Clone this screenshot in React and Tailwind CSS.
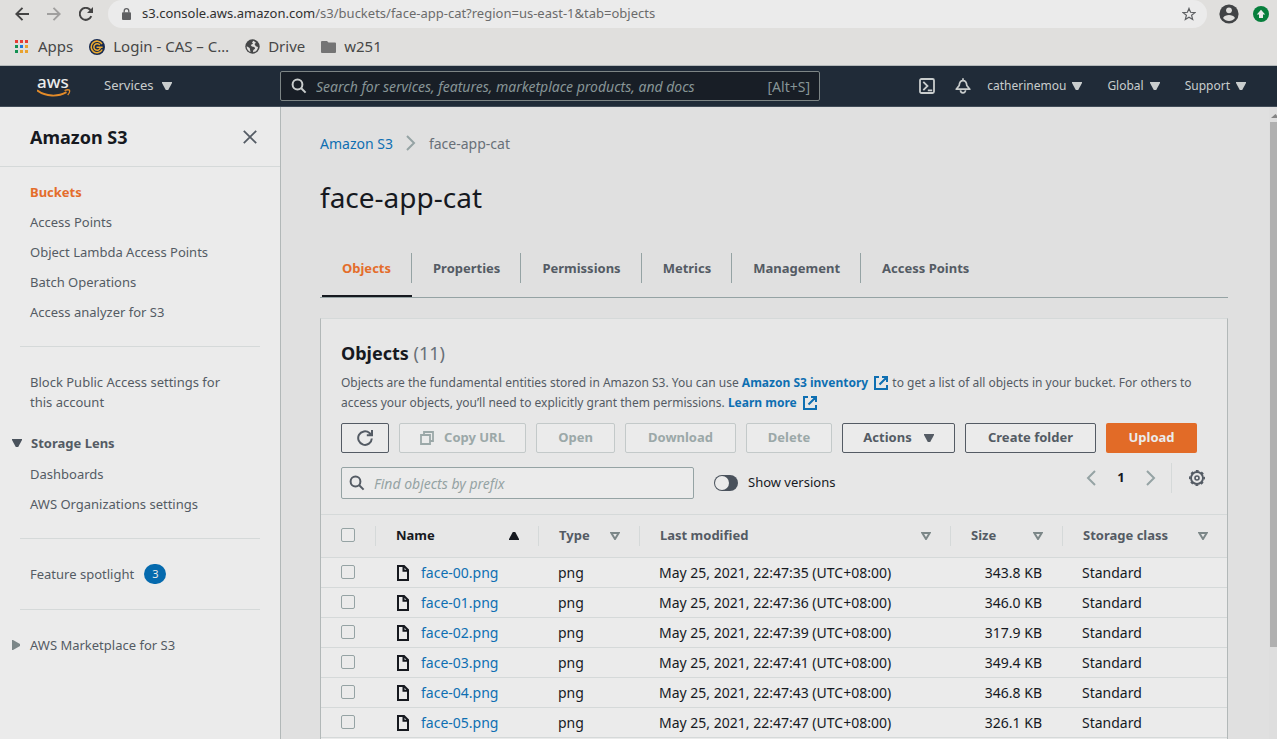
import React from "react";

const files = [
  ["face-00.png", "May 25, 2021, 22:47:35 (UTC+08:00)", "343.8 KB"],
  ["face-01.png", "May 25, 2021, 22:47:36 (UTC+08:00)", "346.0 KB"],
  ["face-02.png", "May 25, 2021, 22:47:39 (UTC+08:00)", "317.9 KB"],
  ["face-03.png", "May 25, 2021, 22:47:41 (UTC+08:00)", "349.4 KB"],
  ["face-04.png", "May 25, 2021, 22:47:43 (UTC+08:00)", "346.8 KB"],
  ["face-05.png", "May 25, 2021, 22:47:47 (UTC+08:00)", "326.1 KB"],
];

function Caret({ className = "" }) {
  return (
    <svg viewBox="0 0 10 8" className={"h-2 w-[10px] shrink-0 " + className} fill="currentColor" aria-hidden="true">
      <path d="M0 0h10v1L6.2 8H3.8L0 1z" />
    </svg>
  );
}

function SortIcon() {
  return (
    <svg viewBox="0 0 10 8" className="h-2 w-[10px] shrink-0 text-[#7c8788]" fill="none" stroke="currentColor" strokeWidth="2" aria-hidden="true">
      <path d="M1.3 1h7.4L5 7z" />
    </svg>
  );
}

function Magnifier({ className }) {
  return (
    <svg viewBox="0 0 16 16" className={"h-4 w-4 shrink-0 " + className} fill="none" stroke="currentColor" strokeWidth="2" aria-hidden="true">
      <circle cx="6.5" cy="6.5" r="4.9" />
      <path d="M10 10l4.600 4.600" />
    </svg>
  );
}

function External() {
  return (
    <svg viewBox="0 0 16 16" className="ml-[2px] inline-block h-4 w-4 align-[-4px]" fill="none" stroke="currentColor" strokeWidth="2" aria-hidden="true">
      <path d="M6 2H2v12h12v-4M9 2h5v5M14 2L6.500 9.500" />
    </svg>
  );
}

function BrowserBar() {
  return (
    <div className="border-b border-[#b4b9ba] bg-[#e0dfdd]">
      <div className="flex h-7 items-center pr-2">
        <div className="flex w-[108px] shrink-0 items-center gap-[18px] pl-[15px] text-[#444]">
          <button aria-label="Back">
            <svg viewBox="0 0 14 14" className="block h-[14px] w-[14px]" fill="none" stroke="currentColor" strokeWidth="1.9"><path d="M14 7H1.500M7.500 .8L1.300 7l6.200 6.200" /></svg>
          </button>
          <button aria-label="Forward" className="text-[#a09f9e]">
            <svg viewBox="0 0 14 14" className="block h-[14px] w-[14px]" fill="none" stroke="currentColor" strokeWidth="1.9"><path d="M0 7h12.500M6.500 .8L12.700 7l-6.200 6.200" /></svg>
          </button>
          <button aria-label="Reload">
            <svg viewBox="0 0 14 14" className="block h-[14px] w-[14px]" fill="none" stroke="currentColor" strokeWidth="2"><path d="M12.300 9.200A6 6 0 1 1 11.200 2.800L12.500 4" /><path d="M14 0v6H8z" fill="currentColor" stroke="none" /></svg>
          </button>
        </div>
        <div className="flex h-7 min-w-0 grow items-center rounded-full bg-[#ebebeb] pr-[11px] pl-[14px]">
          <svg viewBox="0 0 9 12" className="h-3 w-[9px]" aria-hidden="true">
            <path d="M2.200 4.500V3a2.300 2.300 0 0 1 4.600 0v1.500" fill="none" stroke="#5f6062" strokeWidth="1.300" />
            <rect y="4.200" width="9" height="7.800" rx="1" fill="#5f6062" />
          </svg>
          <div className="ml-[11px] grow text-[13px] whitespace-nowrap text-[#6b6b6b]">
            <span className="text-[#303030]">s3.console.aws.amazon.com</span>/s3/buckets/face-app-cat?region=us-east-1&amp;tab=objects
          </div>
          <button aria-label="Bookmark this page">
            <svg viewBox="0 0 14 14" className="block h-[14px] w-[14px]" fill="none" stroke="#5e6063" strokeWidth="1.200"><path d="M7 1.400l1.600 3.900 4.300.3-3.300 2.700 1.100 4.200L7 10.200l-3.700 2.300 1.100-4.200L1.100 5.600l4.300-.3z" /></svg>
          </button>
        </div>
        <div className="ml-3 flex shrink-0 items-center gap-[14px]">
          <button aria-label="Profile">
            <svg viewBox="0 0 20 20" className="block h-5 w-5"><circle cx="10" cy="10" r="9.600" fill="#414345" /><circle cx="10" cy="6.300" r="2.900" fill="#e0dfdd" /><path d="M4 14c1.200-2.200 3.500-3 6-3s4.800.8 6 3c-1.500 2-3.600 3-6 3s-4.500-1-6-3z" fill="#e0dfdd" /></svg>
          </button>
          <button aria-label="Update">
            <svg viewBox="0 0 16 16" className="block h-4 w-4"><circle cx="8" cy="8" r="8" fill="#077f3c" /><path d="M8 3.800l4.200 4.600H10V12H6V8.400H3.800z" fill="#ebebeb" /></svg>
          </button>
        </div>
      </div>
      <nav aria-label="Bookmarks" className="flex h-[37px] items-center pl-[15px] text-[15px] text-[#474747]">
        <a href="#apps" className="flex items-center gap-[10px]">
          <svg viewBox="0 0 13 13" className="h-[13px] w-[13px]" aria-hidden="true">
            <path d="M0 0h3v3H0zM5 0h3v3H5zM10 0h3v3h-3z" fill="#e63c33" />
            <path d="M0 5h3v3H0zM0 10h3v3H0z" fill="#149152" />
            <path d="M5 5h3v3H5z" fill="#1b78dc" />
            <path d="M10 5h3v3h-3zM5 10h3v3H5zM10 10h3v3h-3z" fill="#e9a22e" />
          </svg>
          Apps
        </a>
        <a href="#login" className="ml-4 flex items-center gap-2">
          <svg viewBox="0 0 16 16" className="h-4 w-4" aria-hidden="true">
            <circle cx="8" cy="8" r="8" fill="#16294f" />
            <path d="M13 5A5.800 5.800 0 1 0 13.200 10.500M10.800 6A3.300 3.300 0 1 0 11.100 9.500V8.200H7.500M11 8.200h2.600" fill="none" stroke="#eeab2d" strokeWidth="1.500" />
          </svg>
          Login - CAS – C…
        </a>
        <a href="#drive" className="ml-4 flex items-center gap-2">
          <svg viewBox="0 0 15 15" className="h-[15px] w-[15px]" aria-hidden="true">
            <circle cx="7.500" cy="7.500" r="7.200" fill="#454647" />
            <path d="M8.500 1.700L7 3.200l1 1.600-2.300 1.300 1.200 1.500 2.500.4.700 1.700-1.800 1.300-.3 2.200c3-.3 4.800-2.500 5-5.300l-2.200-.7-1.300-2.100 1.500-1.300z" fill="#e0dfdd" />
            <path d="M1.700 7.200l3 1.800.8 3.900C3.300 12.200 1.500 9.900 1.700 7.200z" fill="#e0dfdd" />
          </svg>
          Drive
        </a>
        <a href="#w251" className="ml-4 flex items-center gap-2">
          <svg viewBox="0 0 15 12" className="h-3 w-[15px]" aria-hidden="true"><path d="M1 0h5l1.500 1.500H14a1 1 0 0 1 1 1V11a1 1 0 0 1-1 1H1a1 1 0 0 1-1-1V1a1 1 0 0 1 1-1z" fill="#747474" /></svg>
          w251
        </a>
      </nav>
    </div>
  );
}

function ConsoleHeader() {
  return (
    <header className="flex h-[41px] shrink-0 items-center border-b border-[#414c58] bg-[#202b38] pr-[31px] pl-[37px] text-[12px] text-[#c9cdcd]">
      <a href="#home" aria-label="aws" className="flex w-[67px] shrink-0 flex-col">
        <span className="text-[17px] leading-[14px] font-medium text-[#ebebeb]">aws</span>
        <svg viewBox="0 0 34 8" className="h-2 w-[34px]" fill="none" stroke="#e38b29" aria-hidden="true">
          <path d="M0 1.300C9 8 21 8 29.500 3.200" strokeWidth="1.900" />
          <path d="M27.500 1.500c2-.8 4-.9 5-.4.400 1.500-.4 3.700-1.800 5" strokeWidth="1.300" />
        </svg>
      </a>
      <button className="flex w-[176px] shrink-0 items-center gap-2 text-[13px]">Services <Caret /></button>
      <label className="flex h-[30px] w-[540px] items-center rounded-[2px] border border-[#7d8585] bg-[#181e26] pr-[9px] pl-[10px] text-[14px]">
        <Magnifier className="text-[#c9cdcd]" />
        <input type="text" aria-label="Search services" placeholder="Search for services, features, marketplace products, and docs" className="ml-[9px] min-w-0 grow bg-transparent italic outline-none placeholder:text-[#879596]" />
        <span className="text-[#879596]">[Alt+S]</span>
      </label>
      <div className="ml-auto flex items-center">
        <button aria-label="CloudShell">
          <svg viewBox="0 0 16 16" className="block h-4 w-4" fill="none" stroke="currentColor" strokeWidth="1.800"><rect x="1" y="1" width="14" height="14" rx="1.500" /><path d="M4.300 3.800L8.500 8l-4.200 4.200M8.800 12.300h4.400" /></svg>
        </button>
        <button aria-label="Notifications" className="ml-5">
          <svg viewBox="0 0 16 16" className="block h-4 w-4" fill="none" stroke="currentColor" strokeWidth="1.700" strokeLinejoin="round"><path d="M1.200 11.200h13.600L11.800 7.500C11.600 4.500 10.500 2.600 8 2.600S4.400 4.500 4.200 7.500zM8 .3v2.300" /><path d="M5.500 12.300a2.500 2.500 0 0 0 5 0" /></svg>
        </button>
        <button className="ml-4 flex items-center gap-[6px]">catherinemou <Caret /></button>
        <button className="ml-[25px] flex items-center gap-[6px]">Global <Caret /></button>
        <button className="ml-[25px] flex items-center gap-[6px]">Support <Caret /></button>
      </div>
    </header>
  );
}

function SideLink({ children }) {
  return <a href="#nav" className="block py-[5px]">{children}</a>;
}

function Sidebar() {
  return (
    <aside className="w-[281px] shrink-0 border-r border-[#b2b8b8] bg-[#ebebeb] text-[13px] leading-5 text-[#545b64]">
      <div className="flex h-[60px] items-center justify-between border-b border-[#d5d9d9] pr-[23px] pl-[30px]">
        <h2 className="text-[18px] font-bold text-[#16191f]">Amazon S3</h2>
        <button aria-label="Close navigation">
          <svg viewBox="0 0 14 14" className="block h-[14px] w-[14px]" fill="none" stroke="currentColor" strokeWidth="1.800"><path d="M.8.8l12.400 12.400M13.200.8L.8 13.200" /></svg>
        </button>
      </div>
      <nav aria-label="Amazon S3" className="px-5">
        <div className="border-b border-[#d5d9d9] px-[10px] pt-[10px] pb-[19px]">
          <a href="#buckets" className="block py-[5px] font-bold text-[#e46d2b]">Buckets</a>
          <SideLink>Access Points</SideLink>
          <SideLink>Object Lambda Access Points</SideLink>
          <SideLink>Batch Operations</SideLink>
          <SideLink>Access analyzer for S3</SideLink>
        </div>
        <div className="border-b border-[#d5d9d9] pt-5 pr-6 pb-[19px] pl-[10px]">
          <SideLink>Block Public Access settings for this account</SideLink>
          <button className="-ml-[18px] mt-[11px] flex items-center gap-[9px] pt-[5px] pb-[6px] font-bold"><Caret className="text-[#4a525c]" /> Storage Lens</button>
          <SideLink>Dashboards</SideLink>
          <SideLink>AWS Organizations settings</SideLink>
        </div>
        <div className="border-b border-[#d5d9d9] py-5 pl-[10px]">
          <a href="#spotlight" className="flex items-center py-[5px]">
            Feature spotlight
            <span className="ml-[10px] rounded-full bg-[#056aae] px-2 text-[11px] text-[#ebebeb]">3</span>
          </a>
        </div>
        <button className="-ml-2 mt-5 flex items-center gap-[10px] py-[5px]">
          <svg viewBox="0 0 8 10" className="h-[10px] w-2" fill="#7c8788" aria-hidden="true"><path d="M0 0h1l7 4v2l-7 4H0z" /></svg>
          AWS Marketplace for S3
        </button>
      </nav>
    </aside>
  );
}

const tabs = ["Objects", "Properties", "Permissions", "Metrics", "Management", "Access Points"];

function Tabs() {
  return (
    <div role="tablist" className="mt-[33px] flex border-b border-[#95a3a4] pl-[2px] text-[13px] leading-[30px] font-bold text-[#545b64]">
      {tabs.map((t, i) => (
        <button
          key={t}
          role="tab"
          aria-selected={i === 0}
          className={i === 0 ? "border-b-2 border-[#16191f] pb-3 text-[#e46d2b]" : "border-b-2 border-transparent pb-3"}
        >
          <span className={i === tabs.length - 1 ? "block px-[21px]" : i === 0 ? "block border-r border-[#95a3a4] px-5" : "block border-r border-[#95a3a4] pr-5 pl-[21px]"}>{t}</span>
        </button>
      ))}
    </div>
  );
}

const buttonBase = "flex h-[30px] shrink-0 items-center justify-center rounded-[2px] border bg-[#ebebeb] ";
const enabled = buttonBase + "border-[#545b64] text-[#545b64] ";
const disabled = buttonBase + "border-[#c3c9c9] text-[#9ba8a8] ";

function Toolbar() {
  return (
    <div className="mt-[10px] flex gap-[10px] text-[13px] font-bold">
      <button aria-label="Refresh" className={enabled + "w-12"}>
        <svg viewBox="0 0 16 16" className="h-4 w-4" fill="none" stroke="currentColor" strokeWidth="2"><path d="M14.800 8.500A6.800 6.800 0 1 1 12.500 3L15 5.200M15 0v5.200H9.800" /></svg>
      </button>
      <button disabled className={disabled + "w-[127px]"}>
        <svg viewBox="0 0 14 14" className="mr-[10px] h-[14px] w-[14px]" fill="none" stroke="currentColor" strokeWidth="1.800" aria-hidden="true"><path d="M1 4h9v9H1zM4 4V1h9v9h-3" /></svg>
        Copy URL
      </button>
      <button disabled className={disabled + "w-[79px]"}>Open</button>
      <button disabled className={disabled + "w-[111px]"}>Download</button>
      <button disabled className={disabled + "w-[86px]"}>Delete</button>
      <button className={enabled + "w-[113px]"}>Actions <Caret className="ml-3" /></button>
      <button className={enabled + "w-[131px]"}>Create folder</button>
      <button className="flex h-[30px] w-[91px] shrink-0 items-center justify-center rounded-[2px] bg-[#e26b27] text-[#ebebeb]">Upload</button>
    </div>
  );
}

function Filters() {
  return (
    <div className="mt-[14px] flex items-start pb-[15px] text-[13px]">
      <label className="flex h-8 w-[353px] items-center rounded-[2px] border border-[#95a3a4] bg-[#ebebeb] px-[7px] text-[14px]">
        <Magnifier className="text-[#545b64]" />
        <input type="text" aria-label="Find objects by prefix" placeholder="Find objects by prefix" className="ml-[9px] min-w-0 grow bg-transparent italic outline-none placeholder:text-[#95a3a4]" />
      </label>
      <label className="ml-5 flex h-8 items-center text-[#16191f]">
        <input type="checkbox" role="switch" className="peer sr-only" />
        <span className="mr-[10px] flex h-4 w-6 items-center rounded-full bg-[#4a525c] px-px">
          <span className="h-[14px] w-[14px] rounded-full bg-[#ebebeb]" />
        </span>
        Show versions
      </label>
      <div className="mr-[2px] ml-auto flex h-[22px] items-center">
        <button aria-label="Previous page" className="text-[#95a3a4]">
          <svg viewBox="0 0 10 16" className="block h-4 w-[10px]" fill="none" stroke="currentColor" strokeWidth="2"><path d="M9 1L2 8l7 7" /></svg>
        </button>
        <span className="w-[50px] text-center font-bold text-[#16191f]">1</span>
        <button aria-label="Next page" className="text-[#95a3a4]">
          <svg viewBox="0 0 10 16" className="block h-4 w-[10px]" fill="none" stroke="currentColor" strokeWidth="2"><path d="M1 1l7 7-7 7" /></svg>
        </button>
        <span className="mr-[17px] ml-[15px] h-[30px] w-px bg-[#d5d9d9]" />
        <button aria-label="Preferences" className="text-[#545b64]">
          <svg viewBox="0 0 16 16" className="block h-4 w-4" fill="none" stroke="currentColor">
            <circle cx="8" cy="8" r="6" strokeWidth="1.900" />
            <circle cx="8" cy="8" r="7.200" strokeWidth="1.600" strokeDasharray="2.830 2.830" strokeDashoffset="1.400" />
            <circle cx="8" cy="8" r="2" strokeWidth="1.600" />
          </svg>
        </button>
      </div>
    </div>
  );
}

function Box({ label }) {
  return <input type="checkbox" aria-label={label} className="block h-[14px] w-[14px] appearance-none rounded-[2px] border border-[#95a3a4] bg-[#ebebeb]" />;
}

function HeadCell({ children, icon, dark }) {
  return (
    <th className="relative border-y border-[#d5d9d9] p-0 text-left">
      <span className="absolute top-[11px] left-0 h-5 w-px bg-[#d5d9d9]" />
      <div className={"flex items-center justify-between pr-[19px] pl-[21px] " + (dark ? "text-[#16191f]" : "")}>
        {children}
        {icon}
      </div>
    </th>
  );
}

function ObjectsTable() {
  return (
    <table className="w-full table-fixed border-separate border-spacing-0 text-[#16191f]">
      <colgroup>
        <col className="w-[54px]" />
        <col className="w-[163px]" />
        <col className="w-[101px]" />
        <col />
        <col className="w-[112px]" />
        <col className="w-[165px]" />
      </colgroup>
      <thead>
        <tr className="h-11 text-[13px] text-[#545b64]">
          <th className="border-y border-[#d5d9d9] p-0 pb-[2px] pl-5"><Box label="Select all objects" /></th>
          <HeadCell
            dark
            icon={<svg viewBox="0 0 10 8" className="h-2 w-[10px]" fill="#16191f" aria-hidden="true"><path d="M0 8h10V7L6.200 0H3.800L0 7z" /></svg>}
          >
            Name
          </HeadCell>
          <HeadCell icon={<SortIcon />}>Type</HeadCell>
          <HeadCell icon={<SortIcon />}>Last modified</HeadCell>
          <HeadCell icon={<SortIcon />}>Size</HeadCell>
          <HeadCell icon={<SortIcon />}>Storage class</HeadCell>
        </tr>
      </thead>
      <tbody className="bg-[#ebebeb] text-[14px]">
        {files.map(([name, date, size]) => (
          <tr key={name} className="h-[30px] whitespace-nowrap">
            <td className="border-b border-[#d5d9d9] p-0 pb-[2px] pl-5"><Box label={"Select " + name} /></td>
            <td className="border-b border-[#d5d9d9] p-0 pl-[21px]">
              <a href="#object" className="flex items-center gap-3 text-[#0e6fb2]">
                <svg viewBox="0 0 13 16" className="h-4 w-[13px] shrink-0" fill="none" stroke="#16191f" strokeWidth="2" aria-hidden="true"><path d="M2 1h6l4 4v10H2zM7.500 1v4.700H12" /></svg>
                {name}
              </a>
            </td>
            <td className="border-b border-[#d5d9d9] p-0 pl-5">png</td>
            <td className="border-b border-[#d5d9d9] p-0 pl-5">{date}</td>
            <td className="border-b border-[#d5d9d9] p-0 pr-5 text-right">{size}</td>
            <td className="border-b border-[#d5d9d9] p-0 pl-5">Standard</td>
          </tr>
        ))}
      </tbody>
    </table>
  );
}

export default function App() {
  return (
    <div className="flex h-screen flex-col overflow-hidden bg-[#e0e0e0] font-['Noto_Sans',sans-serif]">
      <BrowserBar />
      <ConsoleHeader />
      <div className="flex min-h-0 grow">
        <Sidebar />
        <main className="flex min-w-0 grow flex-col pr-[41px] pl-[39px]">
          <nav aria-label="Breadcrumb" className="mt-[26px] flex h-5 items-center text-[14px] text-[#687078]">
            <a href="#s3" className="text-[#0e6fb2]">Amazon S3</a>
            <svg viewBox="0 0 10 16" className="mx-[13px] h-4 w-[10px]" fill="none" stroke="#95a3a4" strokeWidth="2" aria-hidden="true"><path d="M1 1l7 7-7 7" /></svg>
            <span>face-app-cat</span>
          </nav>
          <h1 className="mt-[22px] text-[28px] leading-[45px] text-[#16191f]">face-app-cat</h1>
          <Tabs />
          <section className="mt-5 flex grow flex-col border border-b-0 border-t-[#d5d9d9] border-x-[#b2b8b8] bg-[#e7e7e7]">
            <div className="px-5 pt-[23px]">
              <h2 className="text-[18px] leading-[22px] font-bold text-[#16191f]">Objects <span className="font-normal text-[#687078]">(11)</span></h2>
              <p className="mt-[9px] -mr-[10px] text-[12px] leading-5 text-[#545b64]">
                Objects are the fundamental entities stored in Amazon S3. You can use{" "}
                <a href="#inventory" className="font-bold text-[#0e6fb2]">Amazon S3 inventory <External /></a> to get a list of all objects in your bucket. For others to access your objects, you’ll need to explicitly grant them permissions.{" "}
                <a href="#learn" className="font-bold text-[#0e6fb2]">Learn more <External /></a>
              </p>
              <Toolbar />
              <Filters />
            </div>
            <ObjectsTable />
            <div className="grow bg-[#ebebeb]" />
          </section>
        </main>
        <div className="flex w-2 shrink-0 flex-col items-end bg-[#dedede]" aria-hidden="true">
          <svg viewBox="0 0 6 4" className="mt-[7px] mb-1 h-1 w-[6px]" fill="#858585"><path d="M4.500 0L6 1.500V4H0z" /></svg>
          <div className="h-[83%] w-[7px] bg-[#b0b0b0]" />
        </div>
      </div>
    </div>
  );
}
